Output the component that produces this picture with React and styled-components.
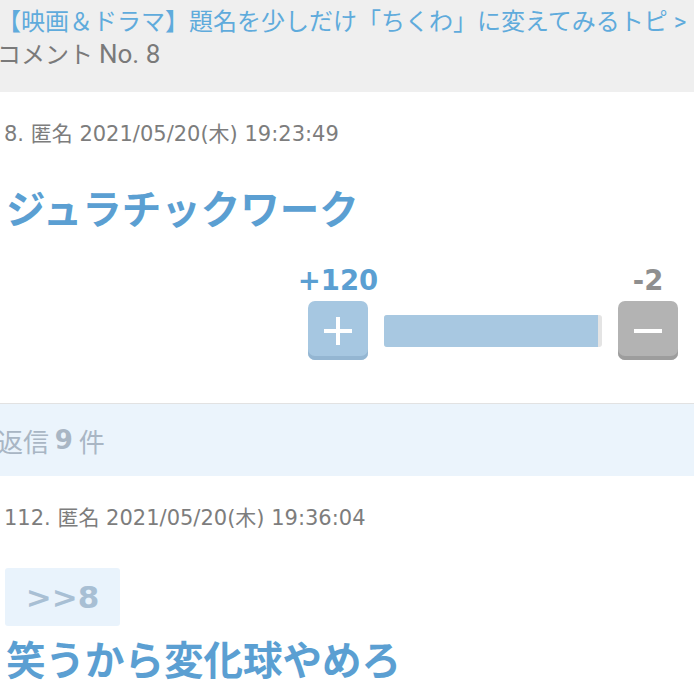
import React from 'react';
import styled, { createGlobalStyle } from 'styled-components';

const GlobalStyle = createGlobalStyle`
  body {
    margin: 0;
    background: #fff;
    overflow: hidden;
  }
`;

const JP = `"Noto Sans CJK JP", sans-serif`;
const META = `"DejaVu Sans", "Noto Sans CJK JP", sans-serif`;

const Page = styled.div`
  width: 694px;
  font-family: ${JP};
`;

const Header = styled.div`
  background: #efefef;
  padding: 6px 0 20px;
  margin-left: -3px;
  font-family: Roboto, ${JP};
  font-size: 24px;
  line-height: 33px;
  white-space: nowrap;
`;

const TopicLink = styled.div`
  color: #5fabdc;
`;

const CommentNo = styled.div`
  color: #7a7a7a;
  height: 33px;
`;

const Latin = styled.span`
  font-size: 26px;
  line-height: 1;
`;

const Comment = styled.section`
  padding: 30px 16px ${p => p.$bottom || 0}px 4px;
  border-bottom: ${p => (p.$divider ? '1px solid #e2e2e2' : 'none')};
`;

const Meta = styled.div`
  font-family: ${META};
  font-size: 21px;
  line-height: 24px;
  color: #7d7d7d;
`;

const Body = styled.div`
  margin-top: ${p => p.$gap}px;
  padding-left: 2px;
  font-size: 39.5px;
  line-height: 50px;
  font-weight: 700;
  color: #5b9fd2;
  white-space: nowrap;
`;

const Votes = styled.div`
  margin-top: 33px;
  display: flex;
  justify-content: flex-end;
  align-items: flex-end;
  gap: 16px;
`;

const VoteCol = styled.div`
  width: 60px;
  display: flex;
  flex-direction: column;
  align-items: center;
  gap: 6px;
`;

const Count = styled.div`
  font-family: "DejaVu Sans", sans-serif;
  font-weight: 700;
  font-size: 27.5px;
  line-height: 30px;
  white-space: nowrap;
  color: ${p => p.$color};
`;

const VoteButton = styled.button`
  width: 60px;
  height: 59px;
  border: none;
  border-radius: 7px;
  padding: 0;
  background: ${p => p.$bg};
  box-shadow: inset 0 -4px 0 ${p => p.$shade};
  display: flex;
  align-items: center;
  justify-content: center;
`;

const Bar = styled.div`
  width: 218px;
  height: 32px;
  margin-bottom: 13px;
  border-radius: 3px;
  background: #e4e4e4;
  overflow: hidden;
  display: flex;
`;

const BarFill = styled.div`
  height: 100%;
  background: #a8c8e1;
`;

const Replies = styled.div`
  background: #ebf4fc;
  height: 72px;
  display: flex;
  align-items: center;
  margin-left: -3px;
  font-size: 26px;
  color: #a9b6c4;
  white-space: pre;
`;

const ReplyNum = styled.b`
  font-family: "DejaVu Sans", sans-serif;
  font-weight: 700;
`;

const Anchor = styled.div`
  margin-top: 38px;
  margin-left: 1px;
  width: 115px;
  height: 58px;
  border-radius: 3px;
  background: #e9f3fc;
  display: flex;
  align-items: center;
  justify-content: center;
  font-family: "DejaVu Sans", sans-serif;
  font-weight: 700;
  font-size: 31px;
  color: #a8bfd4;
`;

function PlusIcon() {
  return (
    <svg width="30" height="30" viewBox="0 0 30 30">
      <rect x="13" y="1" width="4" height="28" fill="#fff" />
      <rect x="1" y="13" width="28" height="4" fill="#fff" />
    </svg>
  );
}

function MinusIcon() {
  return (
    <svg width="30" height="30" viewBox="0 0 30 30">
      <rect x="1" y="13" width="28" height="4" fill="#fff" />
    </svg>
  );
}

export default function App() {
  const plus = 120;
  const minus = 2;
  const ratio = (plus / (plus + minus)) * 100;

  return (
    <Page>
      <GlobalStyle />
      <Header>
        <TopicLink>【映画＆ドラマ】題名を少しだけ「ちくわ」に変えてみるトピ &gt;</TopicLink>
        <CommentNo>コメント <Latin>No. 8</Latin></CommentNo>
      </Header>

      <Comment $divider $bottom={43}>
        <Meta>8. 匿名 2021/05/20(木) 19:23:49</Meta>
        <Body $gap={36}>ジュラチックワーク</Body>
        <Votes>
          <VoteCol>
            <Count $color="#5b9fd2">+{plus}</Count>
            <VoteButton $bg="#a6c7e1" $shade="#94b6d2"><PlusIcon /></VoteButton>
          </VoteCol>
          <Bar>
            <BarFill style={{ width: `${ratio}%` }} />
          </Bar>
          <VoteCol>
            <Count $color="#8f8f8f">-{minus}</Count>
            <VoteButton $bg="#b3b3b3" $shade="#9d9d9d"><MinusIcon /></VoteButton>
          </VoteCol>
        </Votes>
      </Comment>

      <Replies>返信 <ReplyNum>9</ReplyNum> 件</Replies>

      <Comment>
        <Meta>112. 匿名 2021/05/20(木) 19:36:04</Meta>
        <Anchor>&gt;&gt;8</Anchor>
        <Body $gap={7}>笑うから変化球やめろ</Body>
      </Comment>
    </Page>
  );
}
